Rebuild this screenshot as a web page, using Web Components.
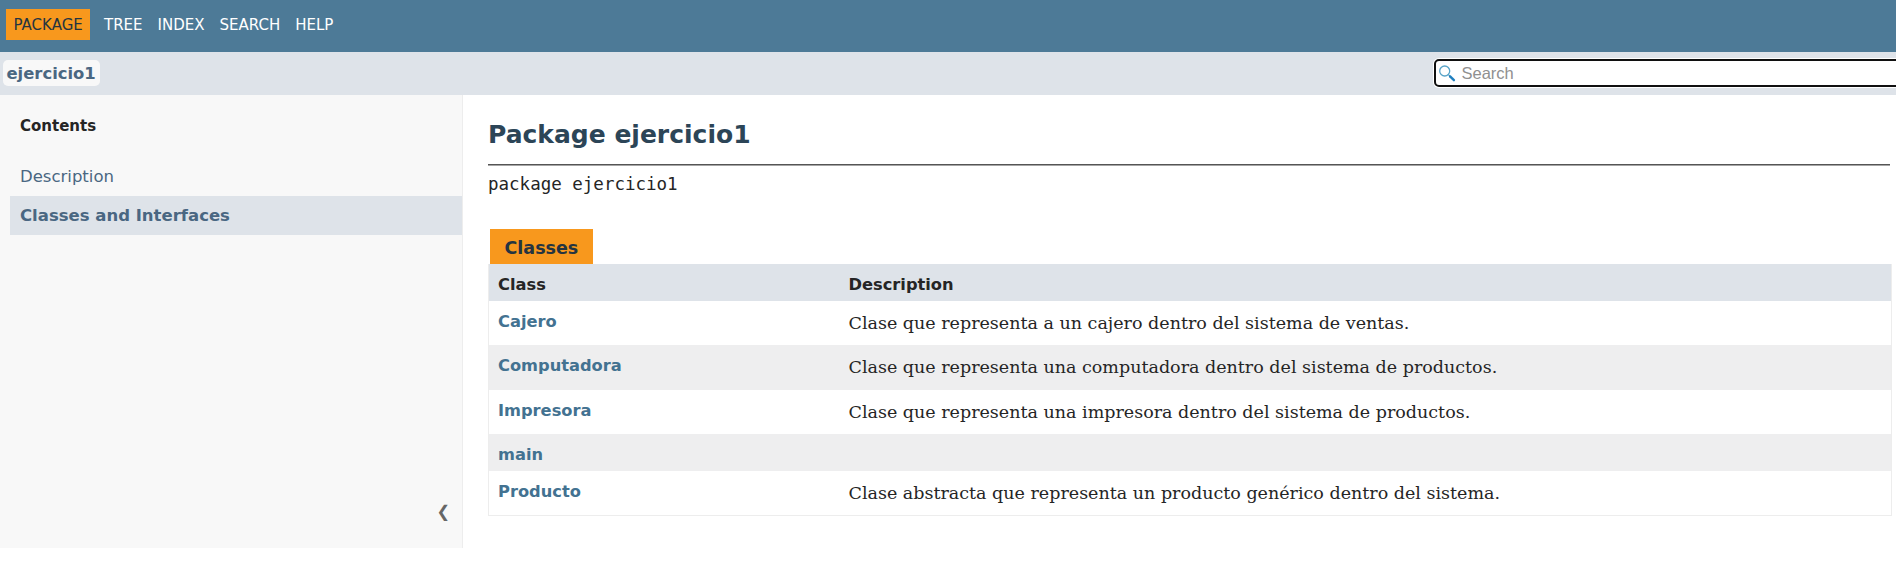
<!DOCTYPE html>
<html lang="es">
<head>
<meta charset="utf-8">
<title>ejercicio1</title>
<style>
html,body{margin:0;height:100%}
body{background:#fff;color:#252525;font-family:"DejaVu Sans",sans-serif;font-size:16.25px;overflow:hidden}
</style>
</head>
<body>
<doc-page></doc-page>
<script>
const define = (name, html) => customElements.define(name, class extends HTMLElement {
  constructor() {
    super();
    const t = document.createElement('template');
    t.innerHTML = html;
    this.attachShadow({mode: 'open'}).appendChild(t.content.cloneNode(true));
  }
});

define('nav-link', `<style>
:host{display:block;color:#fff;font-size:15px;line-height:18px;padding:7px 0 6px;margin-right:15px;white-space:nowrap}
:host([active]){box-sizing:border-box;width:84px;background:#f8981d;color:#253441;padding-left:7.5px;margin-right:14px}
</style><slot></slot>`);

define('top-bar', `<style>
:host{display:flex;box-sizing:border-box;height:52px;background:#4d7a97;padding:9px 0 0 6px;align-items:flex-start}
</style><slot></slot>`);

define('search-box', `<style>
:host{display:flex;align-items:center;box-sizing:border-box;width:480px;height:28px;background:#fff;border:2px solid #101010;border-radius:5px;box-shadow:0 0 0 1px #fff;padding-left:3px;flex:none;font:16.5px "Liberation Sans",sans-serif;color:#909090}
svg{width:17px;height:17px;margin-right:5.5px}
</style>
<svg viewBox="0 0 17 17" fill="none"><circle cx="5.7" cy="6" r="5" stroke="#57a3c7" stroke-width="1.3"/><path d="M9.7 10l1.5 1.5" stroke="#57a3c7" stroke-width="1.4"/><path d="M11.1 11.4l3.8 3.8" stroke="#1f7fbf" stroke-width="2.4" stroke-linecap="round"/></svg><slot></slot>`);

define('sub-bar', `<style>
:host{display:flex;box-sizing:border-box;height:43px;background:#dee3e9;padding:7px 0 0 3px;align-items:flex-start;overflow:hidden}
.crumb{flex:none;box-sizing:border-box;width:97px;margin-top:1px;background:#f8f8f8;border-radius:5px;height:26px;line-height:27px;padding-left:3.5px;font-size:16.4px;font-weight:bold;color:#4a6782}
search-box{margin-left:1334px}
</style><div class="crumb"><slot></slot></div><search-box>Search</search-box>`);

define('toc-item', `<style>
:host{display:block;box-sizing:border-box;height:39px;line-height:38px;padding-top:1px;margin-left:10px;padding-left:10px;color:#4a6782;font-size:16.5px}
:host([current]){background:#dee3e9;font-weight:bold}
</style><slot></slot>`);

define('side-bar', `<style>
:host{display:flex;flex-direction:column;box-sizing:border-box;width:463px;height:453px;background:#f8f8f8;border-right:1px solid #ededed;flex:none}
.head{font-weight:bold;font-size:15px;line-height:18px;padding:22px 20px 22px}
.hide{margin:auto 12px 24px auto;color:#666;font-size:16.25px;line-height:24px}
</style><div class="head">Contents</div><slot></slot><div class="hide">❮</div>`);

define('class-row', `<style>
:host{display:grid;grid-template-columns:350.5px 1fr;box-sizing:border-box;height:44px;padding:10px 0 0 9px;background:#fff}
:host([alt]){background:#eeeeef}
:host([tall]){height:45px}
:host([short]){height:37px}
:host([head]){height:37px;background:#dee3e9;font-weight:bold}
.a{font-weight:bold;color:#437291;line-height:22px}
:host([head]) .a{color:#252525}
.b{font:17.5px/24px "DejaVu Serif",serif}
:host([head]) .b{font:bold 16.25px/22px "DejaVu Sans",sans-serif}
</style><div class="a"><slot name="name"></slot></div><div class="b"><slot></slot></div>`);

define('class-table', `<style>
:host{display:block;width:1404px}
.tab{display:block;width:103px;box-sizing:border-box;margin-left:2px;height:35px;line-height:38px;background:#f8981d;color:#253441;font-weight:bold;font-size:17.5px;padding-left:14.5px}
.rows{border:1px solid #ededed;border-top:0}
</style><div class="tab">Classes</div><div class="rows"><slot></slot></div>`);

define('package-main', `<style>
:host{display:block;padding-left:25px}
h1{margin:0;padding:25px 0 14px;font-size:25px;line-height:30px;color:#2c4557}
.rule{width:1402px;height:2px;background:linear-gradient(#555 50%,#a5a5a5 50%)}
.sig{font:17.5px/22px "DejaVu Sans Mono",monospace;padding:7px 0 34px}
</style><h1>Package ejercicio1</h1><div class="rule"></div><div class="sig">package ejercicio1</div><slot></slot>`);

define('doc-page', `<style>
:host{display:block}
.body{display:flex}
</style>
<top-bar><nav-link active>PACKAGE</nav-link><nav-link>TREE</nav-link><nav-link>INDEX</nav-link><nav-link>SEARCH</nav-link><nav-link>HELP</nav-link></top-bar>
<sub-bar>ejercicio1</sub-bar>
<div class="body">
<side-bar><toc-item>Description</toc-item><toc-item current>Classes and Interfaces</toc-item></side-bar>
<package-main><class-table>
<class-row head><span slot="name">Class</span>Description</class-row>
<class-row><span slot="name">Cajero</span>Clase que representa a un cajero dentro del sistema de ventas.</class-row>
<class-row alt tall><span slot="name">Computadora</span>Clase que representa una computadora dentro del sistema de productos.</class-row>
<class-row><span slot="name">Impresora</span>Clase que representa una impresora dentro del sistema de productos.</class-row>
<class-row alt short><span slot="name">main</span></class-row>
<class-row><span slot="name">Producto</span>Clase abstracta que representa un producto genérico dentro del sistema.</class-row>
</class-table></package-main>
</div>`);
</script>
</body>
</html>
